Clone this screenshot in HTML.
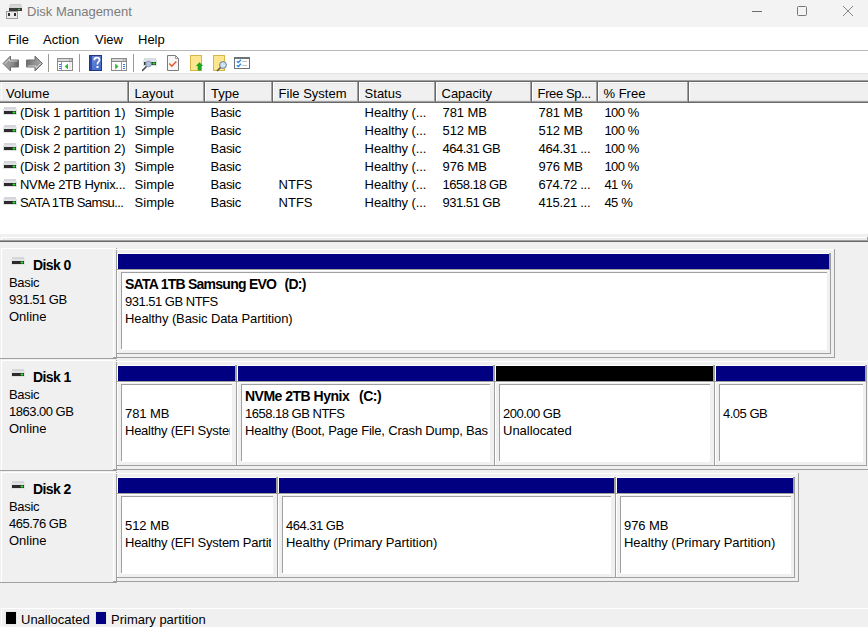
<!DOCTYPE html>
<html><head><meta charset="utf-8">
<style>
*{margin:0;padding:0;box-sizing:border-box}
html,body{width:868px;height:627px;overflow:hidden;background:#f0f0f0;font-family:"Liberation Sans",sans-serif;font-size:13px;color:#000}
.a{position:absolute}
.t{position:absolute;white-space:nowrap;line-height:15px}
svg{position:absolute;overflow:visible}
</style></head><body>
<div class="a" style="left:0px;top:0px;width:868px;height:27px;background:#f3f3f3;"></div>
<svg style="left:0;top:0" width="30" height="26" viewBox="0 0 30 26" shape-rendering="crispEdges">
<rect x="10" y="4" width="11" height="1" fill="#c9c9c9"/>
<rect x="9" y="5" width="13" height="3" fill="#d6d6d6"/>
<rect x="9" y="8" width="13" height="3" fill="#3a3a3a"/>
<rect x="18" y="9" width="2" height="1" fill="#22dd22"/>
<rect x="6" y="11" width="12" height="8" fill="#9a9a9a"/>
<rect x="7" y="12" width="10" height="6" fill="#ececec"/>
<rect x="8" y="13" width="2" height="3" fill="#303030"/>
<rect x="14" y="13" width="2" height="3" fill="#303030"/>
</svg>
<div class="t" style="left:27px;top:4px;color:#7c7c7c">Disk Management</div>
<div class="a" style="left:752px;top:11px;width:10px;height:1px;background:#6e6e6e;"></div>
<div class="a" style="left:797px;top:6px;width:10px;height:10px;border:1px solid #777;border-radius:1.5px"></div>
<svg style="left:843px;top:6px" width="10" height="10" viewBox="0 0 10 10"><path d="M0 0L10 10M10 0L0 10" stroke="#808080" stroke-width="0.95"/></svg>
<div class="a" style="left:0px;top:27px;width:868px;height:23px;background:#ffffff;"></div>
<div class="t" style="left:8px;top:32px;">File</div>
<div class="t" style="left:43px;top:32px;">Action</div>
<div class="t" style="left:95px;top:32px;">View</div>
<div class="t" style="left:138px;top:32px;">Help</div>
<div class="a" style="left:0px;top:50px;width:868px;height:1px;background:#b9b9b9;"></div>
<div class="a" style="left:0px;top:51px;width:868px;height:22px;background:#ffffff;"></div>
<div class="a" style="left:0px;top:73px;width:868px;height:1px;background:#e4e4e4;"></div>
<svg style="left:0;top:52px" width="46" height="22" viewBox="0 52 46 22">
<defs><linearGradient id="ga" x1="0" y1="0" x2="1" y2="0"><stop offset="0" stop-color="#a9a9a9"/><stop offset="0.6" stop-color="#8d8d8d"/><stop offset="1" stop-color="#5e5e5e"/></linearGradient>
<linearGradient id="gb" x1="1" y1="0" x2="0" y2="0"><stop offset="0" stop-color="#a9a9a9"/><stop offset="0.6" stop-color="#8d8d8d"/><stop offset="1" stop-color="#6a6a6a"/></linearGradient></defs>
<path d="M3 63.5L10.5 56V60H18.5V67H10.5V71Z" fill="url(#ga)" stroke="#6f6f6f" stroke-width="1" stroke-linejoin="round"/>
<path d="M5 63.5L9.5 59V61H17.5" fill="none" stroke="#e9e9e9" stroke-width="0.8"/>
<path d="M42.5 63.5L35 56V60H26.5V67H35V71Z" fill="url(#gb)" stroke="#6f6f6f" stroke-width="1" stroke-linejoin="round"/>
<path d="M40.5 63.5L36 68V66H27.5" fill="none" stroke="#e9e9e9" stroke-width="0.8"/>
</svg>
<div class="a" style="left:48px;top:54px;width:1px;height:18px;background:#9a9a9a;"></div>
<svg style="left:57px;top:58px" width="17" height="14" viewBox="0 0 17 14"><rect x="0.5" y="0.5" width="15" height="12" fill="#fff" stroke="#8a8a8a"/><rect x="1" y="1" width="14" height="2" fill="#d8d8d8"/><rect x="12" y="1.5" width="1" height="1" fill="#888"/><rect x="13.8" y="1.5" width="1" height="1" fill="#888"/><rect x="1" y="3" width="14" height="1" fill="#8a8a8a"/><rect x="4" y="4" width="1" height="8" fill="#9a9a9a"/><rect x="2" y="6" width="2" height="1" fill="#3b7dd8"/><rect x="2" y="8" width="2" height="1" fill="#3b7dd8"/><rect x="2" y="10" width="2" height="1" fill="#3b7dd8"/><path d="M7.7 8.5L11 5.6V11.4Z" fill="#2db82d"/><rect x="12" y="4" width="2.5" height="8" fill="#ececec"/></svg>
<div class="a" style="left:79px;top:54px;width:1px;height:18px;background:#9a9a9a;"></div>
<svg style="left:89px;top:55px" width="13" height="16" viewBox="0 0 13 16">
<defs><linearGradient id="gh" x1="0" y1="0" x2="1" y2="1"><stop offset="0" stop-color="#6f8fe0"/><stop offset="1" stop-color="#3f63c4"/></linearGradient></defs>
<rect x="0" y="0" width="13" height="16" fill="url(#gh)"/>
<rect x="0" y="0" width="3" height="16" fill="#2c4aa8"/>
<rect x="0.5" y="0.5" width="12" height="15" fill="none" stroke="#1c3a8c"/>
<path d="M5.3 5.2C5.3 3.5 6.3 2.6 7.9 2.6C9.5 2.6 10.5 3.5 10.5 4.9C10.5 6.5 8.5 7 8.5 8.8V9.6" fill="none" stroke="#fff" stroke-width="1.7"/>
<rect x="7.5" y="11" width="2" height="2" fill="#fff"/>
</svg>
<svg style="left:111px;top:58px" width="17" height="14" viewBox="0 0 17 14"><rect x="0.5" y="0.5" width="15" height="12" fill="#fff" stroke="#8a8a8a"/><rect x="1" y="1" width="14" height="2" fill="#d8d8d8"/><rect x="12" y="1.5" width="1" height="1" fill="#888"/><rect x="13.8" y="1.5" width="1" height="1" fill="#888"/><rect x="1" y="3" width="14" height="1" fill="#8a8a8a"/><rect x="10" y="4" width="1" height="8" fill="#9a9a9a"/><rect x="12" y="6" width="2" height="1" fill="#3b7dd8"/><rect x="12" y="8" width="2" height="1" fill="#3b7dd8"/><rect x="12" y="10" width="2" height="1" fill="#3b7dd8"/><path d="M7.5 8.5L4.2 5.6V11.4Z" fill="#2db82d"/></svg>
<div class="a" style="left:133px;top:54px;width:1px;height:18px;background:#9a9a9a;"></div>
<svg style="left:141px;top:57px" width="17" height="15" viewBox="0 0 17 15">
<rect x="3" y="1" width="12" height="2" fill="#d9dce0"/>
<rect x="2" y="3" width="14" height="6" fill="#dfe2e6"/>
<rect x="3" y="5" width="12" height="3" fill="#353535"/>
<rect x="11.5" y="6" width="3" height="1" fill="#22dd22"/><rect x="12.5" y="5" width="1" height="3" fill="#22dd22"/>
<path d="M5.6 9.4L1.6 13.4" stroke="#4a5560" stroke-width="1.5" stroke-linecap="round"/>
<circle cx="7.5" cy="7" r="2.9" fill="#a9c4dc" stroke="#7f95a8" stroke-width="0.8"/>
</svg>
<svg style="left:167px;top:55px" width="13" height="16" viewBox="0 0 13 16">
<path d="M0.5 0.5H8.5L11.5 3.5V15.5H0.5Z" fill="#f7f7f7" stroke="#7b7b7b"/>
<path d="M8.5 0.5V3.5H11.5" fill="none" stroke="#9b9b9b"/>
<path d="M2.3 8.6L4.8 11.2L9.3 6.4" fill="none" stroke="#e8562a" stroke-width="1.5"/>
</svg>
<svg style="left:190px;top:55px" width="14" height="16" viewBox="0 0 14 16">
<rect x="0.5" y="0.5" width="11" height="15" fill="#fde68e" stroke="#d9b64a"/>
<path d="M9.5 7.3L13.2 11H11.3V15.5H7.7V11H5.8Z" fill="#1fa51f"/>
</svg>
<svg style="left:213px;top:55px" width="15" height="16" viewBox="0 0 15 16">
<rect x="0.5" y="0.5" width="11" height="15" fill="#fde68e" stroke="#d9b64a"/>
<circle cx="10" cy="10" r="3.4" fill="#cfe3f2" stroke="#6b7d8a" stroke-width="1"/>
<path d="M7.5 12.5L4 16" stroke="#555" stroke-width="1.6"/>
</svg>
<svg style="left:234px;top:57px" width="16" height="12" viewBox="0 0 16 12">
<rect x="0.5" y="0.5" width="15" height="11" fill="#fff" stroke="#6e7378"/>
<rect x="1" y="1" width="14" height="1" fill="#6e7378"/>
<path d="M2.8 4.2L4.4 5.6L7 2.8M2.8 8.2L4.4 9.6L7 6.8" fill="none" stroke="#2f8ae0" stroke-width="1.4"/>
<rect x="8" y="4" width="5" height="1" fill="#c4c4c4"/><rect x="8" y="8" width="5" height="1" fill="#c4c4c4"/>
</svg>
<div class="a" style="left:0px;top:74px;width:868px;height:6px;background:#f0f0f0;"></div>
<div class="a" style="left:0px;top:80px;width:868px;height:1px;background:#a0a0a0;"></div>
<div class="a" style="left:0px;top:81px;width:868px;height:1px;background:#696969;"></div>
<div class="a" style="left:0px;top:82px;width:868px;height:152px;background:#ffffff;"></div>
<div class="a" style="left:0px;top:82px;width:868px;height:21px;background:#f0f0f0;"></div>
<div class="a" style="left:1px;top:82px;width:867px;height:1px;background:#ffffff;"></div>
<div class="a" style="left:2px;top:83px;width:866px;height:1px;background:#e6e6e6;"></div>
<div class="a" style="left:1px;top:82px;width:1px;height:19px;background:#ffffff;"></div>
<div class="a" style="left:0px;top:100px;width:868px;height:1px;background:#e3e3e3;"></div>
<div class="a" style="left:0px;top:101px;width:868px;height:1px;background:#a0a0a0;"></div>
<div class="a" style="left:0px;top:102px;width:868px;height:1px;background:#696969;"></div>
<div class="a" style="left:127px;top:82px;width:1px;height:19px;background:#a0a0a0;"></div>
<div class="a" style="left:128px;top:82px;width:1px;height:20px;background:#696969;"></div>
<div class="a" style="left:129px;top:82px;width:1px;height:19px;background:#ffffff;"></div>
<div class="a" style="left:203px;top:82px;width:1px;height:19px;background:#a0a0a0;"></div>
<div class="a" style="left:204px;top:82px;width:1px;height:20px;background:#696969;"></div>
<div class="a" style="left:205px;top:82px;width:1px;height:19px;background:#ffffff;"></div>
<div class="a" style="left:271px;top:82px;width:1px;height:19px;background:#a0a0a0;"></div>
<div class="a" style="left:272px;top:82px;width:1px;height:20px;background:#696969;"></div>
<div class="a" style="left:273px;top:82px;width:1px;height:19px;background:#ffffff;"></div>
<div class="a" style="left:357px;top:82px;width:1px;height:19px;background:#a0a0a0;"></div>
<div class="a" style="left:358px;top:82px;width:1px;height:20px;background:#696969;"></div>
<div class="a" style="left:359px;top:82px;width:1px;height:19px;background:#ffffff;"></div>
<div class="a" style="left:434px;top:82px;width:1px;height:19px;background:#a0a0a0;"></div>
<div class="a" style="left:435px;top:82px;width:1px;height:20px;background:#696969;"></div>
<div class="a" style="left:436px;top:82px;width:1px;height:19px;background:#ffffff;"></div>
<div class="a" style="left:530px;top:82px;width:1px;height:19px;background:#a0a0a0;"></div>
<div class="a" style="left:531px;top:82px;width:1px;height:20px;background:#696969;"></div>
<div class="a" style="left:532px;top:82px;width:1px;height:19px;background:#ffffff;"></div>
<div class="a" style="left:596px;top:82px;width:1px;height:19px;background:#a0a0a0;"></div>
<div class="a" style="left:597px;top:82px;width:1px;height:20px;background:#696969;"></div>
<div class="a" style="left:598px;top:82px;width:1px;height:19px;background:#ffffff;"></div>
<div class="a" style="left:687px;top:82px;width:1px;height:19px;background:#a0a0a0;"></div>
<div class="a" style="left:688px;top:82px;width:1px;height:20px;background:#696969;"></div>
<div class="a" style="left:689px;top:82px;width:1px;height:19px;background:#ffffff;"></div>
<div class="t" style="left:6px;top:86px;">Volume</div>
<div class="t" style="left:134.6px;top:86px;">Layout</div>
<div class="t" style="left:211px;top:86px;">Type</div>
<div class="t" style="left:278.6px;top:86px;">File System</div>
<div class="t" style="left:364.6px;top:86px;">Status</div>
<div class="t" style="left:441.5px;top:86px;">Capacity</div>
<div class="t" style="left:537.6px;top:86px;letter-spacing:-0.4px;">Free Sp...</div>
<div class="t" style="left:603.5px;top:86px;">% Free</div>
<svg style="left:3px;top:107px" width="15" height="9" viewBox="0 0 15 9">
<rect x="1" y="0" width="12" height="3" fill="#d4d6da"/>
<rect x="0" y="2" width="14" height="6" fill="#dfe1e4"/>
<rect x="1" y="4" width="12" height="3" fill="#2b2b2b"/>
<rect x="9.5" y="5" width="3" height="1" fill="#22dd22"/><rect x="10.5" y="4" width="1" height="3" fill="#22dd22"/>
</svg>
<div class="t" style="left:20px;top:105px;">(Disk 1 partition 1)</div>
<div class="t" style="left:134.6px;top:105px;">Simple</div>
<div class="t" style="left:210.6px;top:105px;letter-spacing:-0.3px;">Basic</div>
<div class="t" style="left:364.6px;top:105px;letter-spacing:-0.1px;">Healthy (...</div>
<div class="t" style="left:442.5px;top:105px;letter-spacing:-0.1px;">781 MB</div>
<div class="t" style="left:538.6px;top:105px;letter-spacing:-0.1px;">781 MB</div>
<div class="t" style="left:604.6px;top:105px;"><span style="letter-spacing:-0.7px">100</span> %</div>
<svg style="left:3px;top:125px" width="15" height="9" viewBox="0 0 15 9">
<rect x="1" y="0" width="12" height="3" fill="#d4d6da"/>
<rect x="0" y="2" width="14" height="6" fill="#dfe1e4"/>
<rect x="1" y="4" width="12" height="3" fill="#2b2b2b"/>
<rect x="9.5" y="5" width="3" height="1" fill="#22dd22"/><rect x="10.5" y="4" width="1" height="3" fill="#22dd22"/>
</svg>
<div class="t" style="left:20px;top:123px;">(Disk 2 partition 1)</div>
<div class="t" style="left:134.6px;top:123px;">Simple</div>
<div class="t" style="left:210.6px;top:123px;letter-spacing:-0.3px;">Basic</div>
<div class="t" style="left:364.6px;top:123px;letter-spacing:-0.1px;">Healthy (...</div>
<div class="t" style="left:442.5px;top:123px;letter-spacing:-0.1px;">512 MB</div>
<div class="t" style="left:538.6px;top:123px;letter-spacing:-0.1px;">512 MB</div>
<div class="t" style="left:604.6px;top:123px;"><span style="letter-spacing:-0.7px">100</span> %</div>
<svg style="left:3px;top:143px" width="15" height="9" viewBox="0 0 15 9">
<rect x="1" y="0" width="12" height="3" fill="#d4d6da"/>
<rect x="0" y="2" width="14" height="6" fill="#dfe1e4"/>
<rect x="1" y="4" width="12" height="3" fill="#2b2b2b"/>
<rect x="9.5" y="5" width="3" height="1" fill="#22dd22"/><rect x="10.5" y="4" width="1" height="3" fill="#22dd22"/>
</svg>
<div class="t" style="left:20px;top:141px;">(Disk 2 partition 2)</div>
<div class="t" style="left:134.6px;top:141px;">Simple</div>
<div class="t" style="left:210.6px;top:141px;letter-spacing:-0.3px;">Basic</div>
<div class="t" style="left:364.6px;top:141px;letter-spacing:-0.1px;">Healthy (...</div>
<div class="t" style="left:442.5px;top:141px;letter-spacing:-0.5px;">464.31 GB</div>
<div class="t" style="left:538.6px;top:141px;letter-spacing:-0.25px;">464.31 ...</div>
<div class="t" style="left:604.6px;top:141px;"><span style="letter-spacing:-0.7px">100</span> %</div>
<svg style="left:3px;top:161px" width="15" height="9" viewBox="0 0 15 9">
<rect x="1" y="0" width="12" height="3" fill="#d4d6da"/>
<rect x="0" y="2" width="14" height="6" fill="#dfe1e4"/>
<rect x="1" y="4" width="12" height="3" fill="#2b2b2b"/>
<rect x="9.5" y="5" width="3" height="1" fill="#22dd22"/><rect x="10.5" y="4" width="1" height="3" fill="#22dd22"/>
</svg>
<div class="t" style="left:20px;top:159px;">(Disk 2 partition 3)</div>
<div class="t" style="left:134.6px;top:159px;">Simple</div>
<div class="t" style="left:210.6px;top:159px;letter-spacing:-0.3px;">Basic</div>
<div class="t" style="left:364.6px;top:159px;letter-spacing:-0.1px;">Healthy (...</div>
<div class="t" style="left:442.5px;top:159px;letter-spacing:-0.1px;">976 MB</div>
<div class="t" style="left:538.6px;top:159px;letter-spacing:-0.1px;">976 MB</div>
<div class="t" style="left:604.6px;top:159px;"><span style="letter-spacing:-0.7px">100</span> %</div>
<svg style="left:3px;top:179px" width="15" height="9" viewBox="0 0 15 9">
<rect x="1" y="0" width="12" height="3" fill="#d4d6da"/>
<rect x="0" y="2" width="14" height="6" fill="#dfe1e4"/>
<rect x="1" y="4" width="12" height="3" fill="#2b2b2b"/>
<rect x="9.5" y="5" width="3" height="1" fill="#22dd22"/><rect x="10.5" y="4" width="1" height="3" fill="#22dd22"/>
</svg>
<div class="t" style="left:20px;top:177px;letter-spacing:-0.31px;">NVMe 2TB Hynix...</div>
<div class="t" style="left:134.6px;top:177px;">Simple</div>
<div class="t" style="left:210.6px;top:177px;letter-spacing:-0.3px;">Basic</div>
<div class="t" style="left:278.6px;top:177px;">NTFS</div>
<div class="t" style="left:364.6px;top:177px;letter-spacing:-0.1px;">Healthy (...</div>
<div class="t" style="left:442.5px;top:177px;letter-spacing:-0.5px;">1658.18 GB</div>
<div class="t" style="left:538.6px;top:177px;letter-spacing:-0.25px;">674.72 ...</div>
<div class="t" style="left:604.6px;top:177px;"><span style="letter-spacing:-0.7px">41</span> %</div>
<svg style="left:3px;top:197px" width="15" height="9" viewBox="0 0 15 9">
<rect x="1" y="0" width="12" height="3" fill="#d4d6da"/>
<rect x="0" y="2" width="14" height="6" fill="#dfe1e4"/>
<rect x="1" y="4" width="12" height="3" fill="#2b2b2b"/>
<rect x="9.5" y="5" width="3" height="1" fill="#22dd22"/><rect x="10.5" y="4" width="1" height="3" fill="#22dd22"/>
</svg>
<div class="t" style="left:20px;top:195px;letter-spacing:-0.62px;">SATA 1TB Samsu...</div>
<div class="t" style="left:134.6px;top:195px;">Simple</div>
<div class="t" style="left:210.6px;top:195px;letter-spacing:-0.3px;">Basic</div>
<div class="t" style="left:278.6px;top:195px;">NTFS</div>
<div class="t" style="left:364.6px;top:195px;letter-spacing:-0.1px;">Healthy (...</div>
<div class="t" style="left:442.5px;top:195px;letter-spacing:-0.5px;">931.51 GB</div>
<div class="t" style="left:538.6px;top:195px;letter-spacing:-0.25px;">415.21 ...</div>
<div class="t" style="left:604.6px;top:195px;"><span style="letter-spacing:-0.7px">45</span> %</div>
<div class="a" style="left:0px;top:234px;width:868px;height:8px;background:#f0f0f0;"></div>
<div class="a" style="left:2px;top:238px;width:865px;height:2px;background:#ececec;"></div>
<div class="a" style="left:1px;top:237px;width:866px;height:1px;background:#ffffff;"></div>
<div class="a" style="left:1px;top:237px;width:1px;height:3px;background:#ffffff;"></div>
<div class="a" style="left:867px;top:237px;width:1px;height:3px;background:#a0a0a0;"></div>
<div class="a" style="left:0px;top:240px;width:868px;height:1px;background:#a0a0a0;"></div>
<div class="a" style="left:0px;top:241px;width:868px;height:1px;background:#696969;"></div>
<div class="a" style="left:1px;top:248px;width:115px;height:1px;background:#ffffff;"></div>
<div class="a" style="left:1px;top:248px;width:1px;height:110px;background:#ffffff;"></div>
<div class="a" style="left:113px;top:249px;width:1px;height:108px;background:#ffffff;"></div>
<div class="a" style="left:0px;top:358px;width:116px;height:1px;background:#a0a0a0;"></div>
<div class="a" style="left:113px;top:357px;width:3px;height:1px;background:#a0a0a0;"></div>
<div class="a" style="left:116px;top:248px;width:1px;height:1px;background:#a0a0a0;"></div>
<div class="a" style="left:116px;top:249px;width:718px;height:1px;background:#ffffff;"></div>
<div class="a" style="left:116px;top:357px;width:719px;height:1px;background:#a0a0a0;"></div>
<div class="a" style="left:834px;top:249px;width:1px;height:109px;background:#a0a0a0;"></div>
<div class="a" style="left:116px;top:250px;width:1px;height:109px;background:#a0a0a0;"></div>
<div class="a" style="left:117px;top:253px;width:1px;height:100px;background:#ffffff;"></div>
<div class="a" style="left:117px;top:253px;width:712px;height:1px;background:#ffffff;"></div>
<div class="a" style="left:118px;top:254px;width:711px;height:15px;background:#000080;"></div>
<div class="a" style="left:117px;top:269px;width:714px;height:1px;background:#a0a0a0;"></div>
<div class="a" style="left:118px;top:270px;width:711px;height:1px;background:#ffffff;"></div>
<div class="a" style="left:829px;top:253px;width:1px;height:17px;background:#a0a0a0;"></div>
<div class="a" style="left:830px;top:253px;width:1px;height:101px;background:#a0a0a0;"></div>
<div class="a" style="left:117px;top:353px;width:714px;height:1px;background:#a0a0a0;"></div>
<div class="a" style="left:121px;top:272px;width:706px;height:78px;background:#ffffff;"></div>
<div class="a" style="left:121px;top:272px;width:706px;height:1px;background:#a0a0a0;"></div>
<div class="a" style="left:121px;top:272px;width:1px;height:77px;background:#a0a0a0;"></div>
<div class="t" style="left:125px;top:277px;font-weight:bold;font-size:14px;letter-spacing:-0.75px;width:700px;overflow:hidden">SATA 1TB Samsung EVO&nbsp;&nbsp;<span style="margin-left:2px">(D:)</span></div>
<div class="t" style="left:125px;top:294px;letter-spacing:-0.5px;width:700px;overflow:hidden">931.51 GB NTFS</div>
<div class="t" style="left:125px;top:311px;letter-spacing:-0.1px;width:700px;overflow:hidden">Healthy (Basic Data Partition)</div>
<svg style="left:11px;top:257px" width="15" height="9" viewBox="0 0 15 9">
<rect x="1" y="0" width="12" height="3" fill="#d4d6da"/>
<rect x="0" y="2" width="14" height="6" fill="#dfe1e4"/>
<rect x="1" y="4" width="12" height="3" fill="#2b2b2b"/>
<rect x="9.5" y="5" width="3" height="1" fill="#22dd22"/><rect x="10.5" y="4" width="1" height="3" fill="#22dd22"/>
</svg>
<div class="t" style="left:33px;top:258px;font-weight:bold;font-size:14px;letter-spacing:-0.6px">Disk 0</div>
<div class="t" style="left:9px;top:275px;letter-spacing:-0.3px;">Basic</div>
<div class="t" style="left:9px;top:292px;letter-spacing:-0.5px;">931.51 GB</div>
<div class="t" style="left:9px;top:309px;">Online</div>
<div class="a" style="left:1px;top:360px;width:115px;height:1px;background:#ffffff;"></div>
<div class="a" style="left:1px;top:360px;width:1px;height:110px;background:#ffffff;"></div>
<div class="a" style="left:113px;top:361px;width:1px;height:108px;background:#ffffff;"></div>
<div class="a" style="left:0px;top:470px;width:116px;height:1px;background:#a0a0a0;"></div>
<div class="a" style="left:113px;top:469px;width:3px;height:1px;background:#a0a0a0;"></div>
<div class="a" style="left:116px;top:360px;width:1px;height:1px;background:#a0a0a0;"></div>
<div class="a" style="left:116px;top:361px;width:754px;height:1px;background:#ffffff;"></div>
<div class="a" style="left:116px;top:469px;width:755px;height:1px;background:#a0a0a0;"></div>
<div class="a" style="left:116px;top:362px;width:1px;height:109px;background:#a0a0a0;"></div>
<div class="a" style="left:117px;top:365px;width:1px;height:100px;background:#ffffff;"></div>
<div class="a" style="left:117px;top:365px;width:118px;height:1px;background:#ffffff;"></div>
<div class="a" style="left:118px;top:366px;width:117px;height:15px;background:#000080;"></div>
<div class="a" style="left:117px;top:381px;width:119px;height:1px;background:#a0a0a0;"></div>
<div class="a" style="left:118px;top:382px;width:117px;height:1px;background:#ffffff;"></div>
<div class="a" style="left:235px;top:365px;width:1px;height:17px;background:#a0a0a0;"></div>
<div class="a" style="left:117px;top:465px;width:119px;height:1px;background:#a0a0a0;"></div>
<div class="a" style="left:121px;top:384px;width:111px;height:78px;background:#ffffff;"></div>
<div class="a" style="left:121px;top:384px;width:111px;height:1px;background:#a0a0a0;"></div>
<div class="a" style="left:121px;top:384px;width:1px;height:77px;background:#a0a0a0;"></div>
<div class="t" style="left:125px;top:406px;letter-spacing:-0.1px;width:105px;overflow:hidden">781 MB</div>
<div class="t" style="left:125px;top:423px;letter-spacing:-0.25px;width:105px;overflow:hidden">Healthy (EFI System Partition)</div>
<div class="a" style="left:236px;top:365px;width:1px;height:101px;background:#a0a0a0;"></div>
<div class="a" style="left:237px;top:365px;width:1px;height:100px;background:#ffffff;"></div>
<div class="a" style="left:237px;top:365px;width:256px;height:1px;background:#ffffff;"></div>
<div class="a" style="left:238px;top:366px;width:255px;height:15px;background:#000080;"></div>
<div class="a" style="left:237px;top:381px;width:257px;height:1px;background:#a0a0a0;"></div>
<div class="a" style="left:238px;top:382px;width:255px;height:1px;background:#ffffff;"></div>
<div class="a" style="left:493px;top:365px;width:1px;height:17px;background:#a0a0a0;"></div>
<div class="a" style="left:237px;top:465px;width:257px;height:1px;background:#a0a0a0;"></div>
<div class="a" style="left:241px;top:384px;width:249px;height:78px;background:#ffffff;"></div>
<div class="a" style="left:241px;top:384px;width:249px;height:1px;background:#a0a0a0;"></div>
<div class="a" style="left:241px;top:384px;width:1px;height:77px;background:#a0a0a0;"></div>
<div class="t" style="left:245px;top:389px;font-weight:bold;font-size:14px;letter-spacing:-0.5px;width:243px;overflow:hidden">NVMe 2TB Hynix&nbsp;&nbsp;<span style="margin-left:3px">(C:)</span></div>
<div class="t" style="left:245px;top:406px;letter-spacing:-0.5px;width:243px;overflow:hidden">1658.18 GB NTFS</div>
<div class="t" style="left:245px;top:423px;letter-spacing:-0.19px;width:243px;overflow:hidden">Healthy (Boot, Page File, Crash Dump, Basic Data Partition)</div>
<div class="a" style="left:494px;top:365px;width:1px;height:101px;background:#a0a0a0;"></div>
<div class="a" style="left:495px;top:365px;width:1px;height:100px;background:#ffffff;"></div>
<div class="a" style="left:495px;top:365px;width:218px;height:1px;background:#ffffff;"></div>
<div class="a" style="left:496px;top:366px;width:217px;height:15px;background:#000000;"></div>
<div class="a" style="left:495px;top:381px;width:219px;height:1px;background:#a0a0a0;"></div>
<div class="a" style="left:496px;top:382px;width:217px;height:1px;background:#ffffff;"></div>
<div class="a" style="left:713px;top:365px;width:1px;height:17px;background:#a0a0a0;"></div>
<div class="a" style="left:495px;top:465px;width:219px;height:1px;background:#a0a0a0;"></div>
<div class="a" style="left:499px;top:384px;width:211px;height:78px;background:#ffffff;"></div>
<div class="a" style="left:499px;top:384px;width:211px;height:1px;background:#a0a0a0;"></div>
<div class="a" style="left:499px;top:384px;width:1px;height:77px;background:#a0a0a0;"></div>
<div class="t" style="left:503px;top:406px;letter-spacing:-0.5px;width:205px;overflow:hidden">200.00 GB</div>
<div class="t" style="left:503px;top:423px;width:205px;overflow:hidden">Unallocated</div>
<div class="a" style="left:714px;top:365px;width:1px;height:101px;background:#a0a0a0;"></div>
<div class="a" style="left:715px;top:365px;width:1px;height:100px;background:#ffffff;"></div>
<div class="a" style="left:715px;top:365px;width:150px;height:1px;background:#ffffff;"></div>
<div class="a" style="left:716px;top:366px;width:149px;height:15px;background:#000080;"></div>
<div class="a" style="left:715px;top:381px;width:152px;height:1px;background:#a0a0a0;"></div>
<div class="a" style="left:716px;top:382px;width:149px;height:1px;background:#ffffff;"></div>
<div class="a" style="left:865px;top:365px;width:1px;height:17px;background:#a0a0a0;"></div>
<div class="a" style="left:866px;top:365px;width:1px;height:101px;background:#a0a0a0;"></div>
<div class="a" style="left:715px;top:465px;width:152px;height:1px;background:#a0a0a0;"></div>
<div class="a" style="left:719px;top:384px;width:144px;height:78px;background:#ffffff;"></div>
<div class="a" style="left:719px;top:384px;width:144px;height:1px;background:#a0a0a0;"></div>
<div class="a" style="left:719px;top:384px;width:1px;height:77px;background:#a0a0a0;"></div>
<div class="t" style="left:723px;top:406px;letter-spacing:-0.5px;width:138px;overflow:hidden">4.05 GB</div>
<div class="t" style="left:723px;top:423px;width:138px;overflow:hidden"></div>
<svg style="left:11px;top:369px" width="15" height="9" viewBox="0 0 15 9">
<rect x="1" y="0" width="12" height="3" fill="#d4d6da"/>
<rect x="0" y="2" width="14" height="6" fill="#dfe1e4"/>
<rect x="1" y="4" width="12" height="3" fill="#2b2b2b"/>
<rect x="9.5" y="5" width="3" height="1" fill="#22dd22"/><rect x="10.5" y="4" width="1" height="3" fill="#22dd22"/>
</svg>
<div class="t" style="left:33px;top:370px;font-weight:bold;font-size:14px;letter-spacing:-0.6px">Disk 1</div>
<div class="t" style="left:9px;top:387px;letter-spacing:-0.3px;">Basic</div>
<div class="t" style="left:9px;top:404px;letter-spacing:-0.5px;">1863.00 GB</div>
<div class="t" style="left:9px;top:421px;">Online</div>
<div class="a" style="left:1px;top:472px;width:115px;height:1px;background:#ffffff;"></div>
<div class="a" style="left:1px;top:472px;width:1px;height:110px;background:#ffffff;"></div>
<div class="a" style="left:113px;top:473px;width:1px;height:108px;background:#ffffff;"></div>
<div class="a" style="left:0px;top:582px;width:116px;height:1px;background:#a0a0a0;"></div>
<div class="a" style="left:113px;top:581px;width:3px;height:1px;background:#a0a0a0;"></div>
<div class="a" style="left:116px;top:472px;width:1px;height:1px;background:#a0a0a0;"></div>
<div class="a" style="left:116px;top:473px;width:682px;height:1px;background:#ffffff;"></div>
<div class="a" style="left:116px;top:581px;width:683px;height:1px;background:#a0a0a0;"></div>
<div class="a" style="left:798px;top:473px;width:1px;height:109px;background:#a0a0a0;"></div>
<div class="a" style="left:116px;top:474px;width:1px;height:109px;background:#a0a0a0;"></div>
<div class="a" style="left:117px;top:477px;width:1px;height:100px;background:#ffffff;"></div>
<div class="a" style="left:117px;top:477px;width:159px;height:1px;background:#ffffff;"></div>
<div class="a" style="left:118px;top:478px;width:158px;height:15px;background:#000080;"></div>
<div class="a" style="left:117px;top:493px;width:160px;height:1px;background:#a0a0a0;"></div>
<div class="a" style="left:118px;top:494px;width:158px;height:1px;background:#ffffff;"></div>
<div class="a" style="left:276px;top:477px;width:1px;height:17px;background:#a0a0a0;"></div>
<div class="a" style="left:117px;top:577px;width:160px;height:1px;background:#a0a0a0;"></div>
<div class="a" style="left:121px;top:496px;width:152px;height:78px;background:#ffffff;"></div>
<div class="a" style="left:121px;top:496px;width:152px;height:1px;background:#a0a0a0;"></div>
<div class="a" style="left:121px;top:496px;width:1px;height:77px;background:#a0a0a0;"></div>
<div class="t" style="left:125px;top:518px;letter-spacing:-0.1px;width:146px;overflow:hidden">512 MB</div>
<div class="t" style="left:125px;top:535px;letter-spacing:-0.25px;width:146px;overflow:hidden">Healthy (EFI System Partition)</div>
<div class="a" style="left:277px;top:477px;width:1px;height:101px;background:#a0a0a0;"></div>
<div class="a" style="left:278px;top:477px;width:1px;height:100px;background:#ffffff;"></div>
<div class="a" style="left:278px;top:477px;width:336px;height:1px;background:#ffffff;"></div>
<div class="a" style="left:279px;top:478px;width:335px;height:15px;background:#000080;"></div>
<div class="a" style="left:278px;top:493px;width:337px;height:1px;background:#a0a0a0;"></div>
<div class="a" style="left:279px;top:494px;width:335px;height:1px;background:#ffffff;"></div>
<div class="a" style="left:614px;top:477px;width:1px;height:17px;background:#a0a0a0;"></div>
<div class="a" style="left:278px;top:577px;width:337px;height:1px;background:#a0a0a0;"></div>
<div class="a" style="left:282px;top:496px;width:329px;height:78px;background:#ffffff;"></div>
<div class="a" style="left:282px;top:496px;width:329px;height:1px;background:#a0a0a0;"></div>
<div class="a" style="left:282px;top:496px;width:1px;height:77px;background:#a0a0a0;"></div>
<div class="t" style="left:286px;top:518px;letter-spacing:-0.5px;width:323px;overflow:hidden">464.31 GB</div>
<div class="t" style="left:286px;top:535px;letter-spacing:-0.04px;width:323px;overflow:hidden">Healthy (Primary Partition)</div>
<div class="a" style="left:615px;top:477px;width:1px;height:101px;background:#a0a0a0;"></div>
<div class="a" style="left:616px;top:477px;width:1px;height:100px;background:#ffffff;"></div>
<div class="a" style="left:616px;top:477px;width:177px;height:1px;background:#ffffff;"></div>
<div class="a" style="left:617px;top:478px;width:176px;height:15px;background:#000080;"></div>
<div class="a" style="left:616px;top:493px;width:179px;height:1px;background:#a0a0a0;"></div>
<div class="a" style="left:617px;top:494px;width:176px;height:1px;background:#ffffff;"></div>
<div class="a" style="left:793px;top:477px;width:1px;height:17px;background:#a0a0a0;"></div>
<div class="a" style="left:794px;top:477px;width:1px;height:101px;background:#a0a0a0;"></div>
<div class="a" style="left:616px;top:577px;width:179px;height:1px;background:#a0a0a0;"></div>
<div class="a" style="left:620px;top:496px;width:171px;height:78px;background:#ffffff;"></div>
<div class="a" style="left:620px;top:496px;width:171px;height:1px;background:#a0a0a0;"></div>
<div class="a" style="left:620px;top:496px;width:1px;height:77px;background:#a0a0a0;"></div>
<div class="t" style="left:624px;top:518px;letter-spacing:-0.1px;width:165px;overflow:hidden">976 MB</div>
<div class="t" style="left:624px;top:535px;letter-spacing:-0.04px;width:165px;overflow:hidden">Healthy (Primary Partition)</div>
<svg style="left:11px;top:481px" width="15" height="9" viewBox="0 0 15 9">
<rect x="1" y="0" width="12" height="3" fill="#d4d6da"/>
<rect x="0" y="2" width="14" height="6" fill="#dfe1e4"/>
<rect x="1" y="4" width="12" height="3" fill="#2b2b2b"/>
<rect x="9.5" y="5" width="3" height="1" fill="#22dd22"/><rect x="10.5" y="4" width="1" height="3" fill="#22dd22"/>
</svg>
<div class="t" style="left:33px;top:482px;font-weight:bold;font-size:14px;letter-spacing:-0.6px">Disk 2</div>
<div class="t" style="left:9px;top:499px;letter-spacing:-0.3px;">Basic</div>
<div class="t" style="left:9px;top:516px;letter-spacing:-0.5px;">465.76 GB</div>
<div class="t" style="left:9px;top:533px;">Online</div>
<div class="a" style="left:1px;top:608px;width:867px;height:1px;background:#ffffff;"></div>
<div class="a" style="left:1px;top:608px;width:1px;height:19px;background:#ffffff;"></div>
<div class="a" style="left:6px;top:612px;width:10px;height:12px;background:#000;outline:1px solid #e8e8e8"></div>
<div class="t" style="left:21px;top:612px;">Unallocated</div>
<div class="a" style="left:96px;top:612px;width:10px;height:12px;background:#000080;outline:1px solid #e8e8e8"></div>
<div class="t" style="left:111px;top:612px;">Primary partition</div>
</body></html>
